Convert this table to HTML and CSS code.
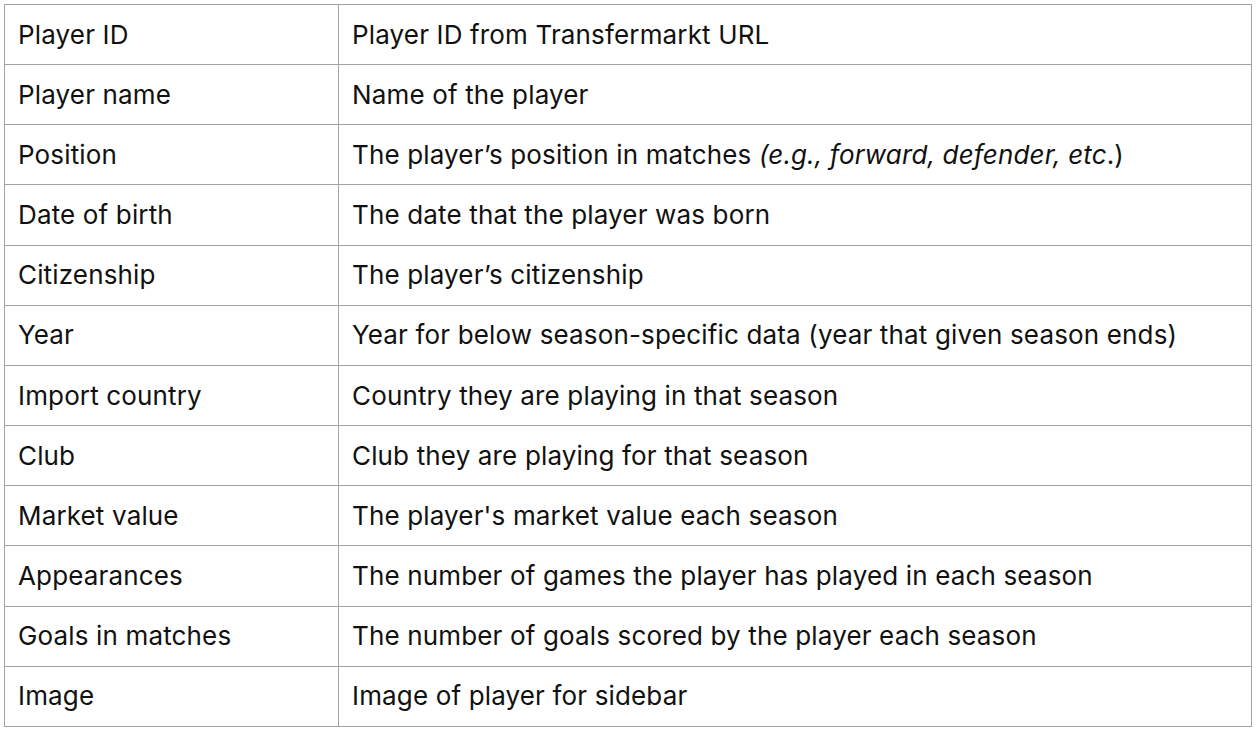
FILE: index.html
```html
<!DOCTYPE html>
<html>
<head>
<meta charset="utf-8">
<link rel="stylesheet" href="styles.css">
</head>
<body>
<table class="spec">
  <colgroup><col class="c1"><col class="c2"></colgroup>
  <tbody>
    <tr><td>Player ID</td><td>Player ID from Transfermarkt URL</td></tr>
    <tr><td>Player name</td><td>Name of the player</td></tr>
    <tr><td>Position</td><td>The player’s position in matches <em>(e.g., forward, defender, etc</em>.)</td></tr>
    <tr><td>Date of birth</td><td>The date that the player was born</td></tr>
    <tr><td>Citizenship</td><td>The player’s citizenship</td></tr>
    <tr><td>Year</td><td>Year for below season-specific data (year that given season ends)</td></tr>
    <tr><td>Import country</td><td>Country they are playing in that season</td></tr>
    <tr><td>Club</td><td>Club they are playing for that season</td></tr>
    <tr><td>Market value</td><td>The player's market value each season</td></tr>
    <tr><td>Appearances</td><td>The number of games the player has played in each season</td></tr>
    <tr><td>Goals in matches</td><td>The number of goals scored by the player each season</td></tr>
    <tr><td>Image</td><td>Image of player for sidebar</td></tr>
  </tbody>
</table>
</body>
</html>
```
FILE: styles.css
```css
html, body {
  margin: 0;
  padding: 0;
  background: #ffffff;
}
body {
  padding: 4px 0 0 4px;
  font-family: Inter, "Noto Sans", sans-serif;
  color: #111111;
}
.spec {
  border-collapse: collapse;
  width: 1248px;
  table-layout: fixed;
}
.spec .c1 { width: 334px; }
.spec td {
  border: 1px solid #a3a3a3;
  padding: 0 13px;
  height: 59.17px;
  font-size: 26px;
  line-height: 32px;
  letter-spacing: 0.15px;
  vertical-align: middle;
  white-space: nowrap;
}
.spec em { font-style: italic; }
```
